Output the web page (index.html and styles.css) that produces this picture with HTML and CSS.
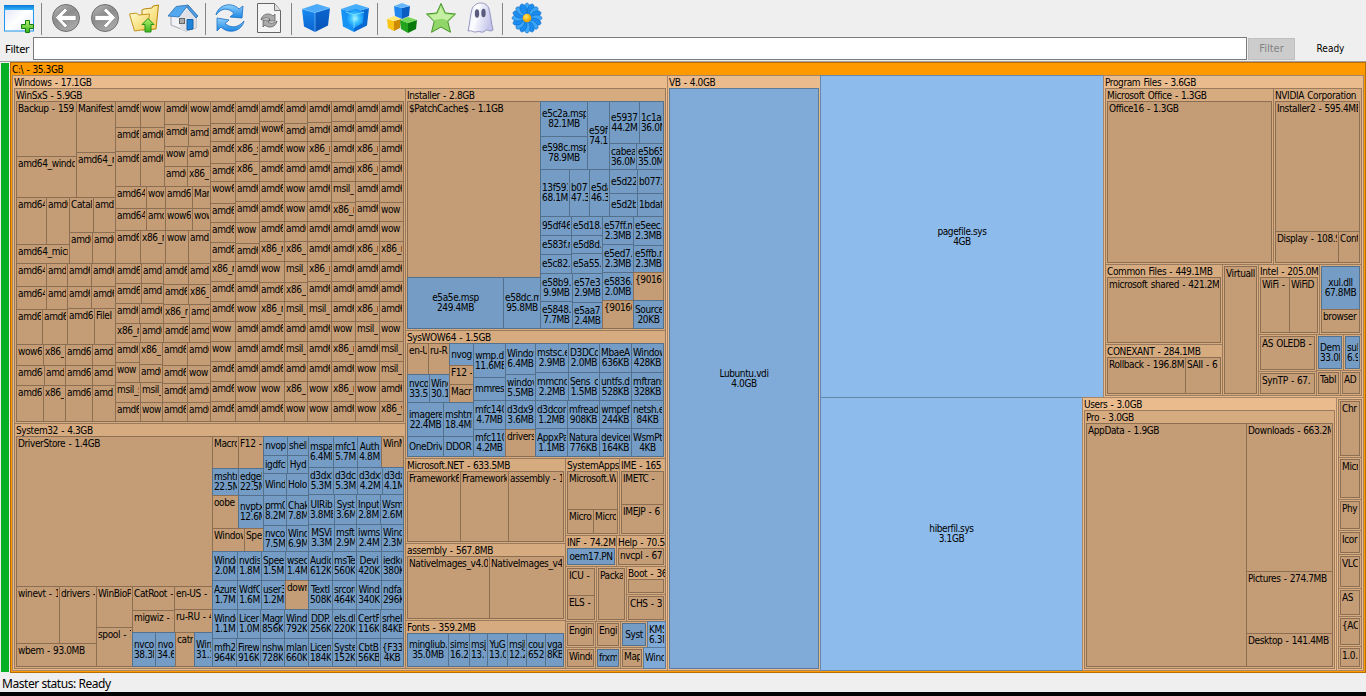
FILE: index.html
```html
<!DOCTYPE html>
<html lang="en">
<head>
<meta charset="utf-8">
<title>Disk usage</title>
<link rel="stylesheet" href="styles.css">
</head>
<body>
<svg class="defs" width="0" height="0" aria-hidden="true">
  <defs>
    <linearGradient id="gray" x1="0" y1="0" x2="0.6" y2="1"><stop offset="0" stop-color="#b9b9b9"/><stop offset="0.5" stop-color="#8c8c8c"/><stop offset="1" stop-color="#a9a9a9"/></linearGradient>
    <linearGradient id="pane" x1="0" y1="0" x2="1" y2="1"><stop offset="0" stop-color="#dfe2f6"/><stop offset="0.5" stop-color="#ffffff"/><stop offset="1" stop-color="#e4e9fa"/></linearGradient>
    <linearGradient id="title" x1="0" y1="0" x2="0" y2="1"><stop offset="0" stop-color="#0a78d8"/><stop offset="1" stop-color="#35b2f8"/></linearGradient>
    <linearGradient id="folder" x1="0" y1="0" x2="1" y2="1"><stop offset="0" stop-color="#fffbd0"/><stop offset="1" stop-color="#f3cf52"/></linearGradient>
    <linearGradient id="lime" x1="0" y1="0" x2="0" y2="1"><stop offset="0" stop-color="#b8f070"/><stop offset="1" stop-color="#35b41d"/></linearGradient>
    <linearGradient id="sky" x1="0" y1="0" x2="0" y2="1"><stop offset="0" stop-color="#8fd0fb"/><stop offset="1" stop-color="#1c86e4"/></linearGradient>
    <linearGradient id="cubeL" x1="0" y1="0" x2="0" y2="1"><stop offset="0" stop-color="#188af0"/><stop offset="1" stop-color="#0a62cf"/></linearGradient>
    <linearGradient id="cubeR" x1="0" y1="0" x2="0" y2="1"><stop offset="0" stop-color="#0b65cf"/><stop offset="1" stop-color="#0754b8"/></linearGradient>
    <linearGradient id="ghost" x1="0" y1="0" x2="1" y2="0.3"><stop offset="0" stop-color="#e4e4f8"/><stop offset="0.4" stop-color="#fdfdff"/><stop offset="1" stop-color="#c4c4ea"/></linearGradient>
    <radialGradient id="glow"><stop offset="0" stop-color="#aef6ff"/><stop offset="0.5" stop-color="#38c0ff"/><stop offset="1" stop-color="#128cf4"/></radialGradient>
    <radialGradient id="sun" cx="0.4" cy="0.35"><stop offset="0" stop-color="#ffe96a"/><stop offset="1" stop-color="#f0a800"/></radialGradient>
  </defs>
</svg>

<div class="toolbar">
  <svg class="icon" viewBox="0 0 32 32"><rect x="1.5" y="3.5" width="29" height="25.5" fill="url(#pane)" stroke="#2397ee"/><rect x="1" y="3" width="30" height="5" fill="url(#title)"/><path d="M22.500 18.500h4v4h4v4h-4v4h-4v-4h-4v-4h4z" fill="url(#lime)" stroke="#127a12"/></svg>
  <i class="sep"></i>
  <svg class="icon" viewBox="0 0 32 32"><circle cx="16" cy="16" r="13.500" fill="url(#gray)" stroke="#707070"/><path d="M5.500 15.500L15 6l2.500 2.500-5 5H26v5H12.500l5 5L15 26z" fill="#fff" stroke="#777" stroke-width=".6"/></svg>
  <svg class="icon" viewBox="0 0 32 32"><circle cx="16" cy="16" r="13.500" fill="url(#gray)" stroke="#707070"/><path d="M26.500 15.500L17 6l-2.500 2.500 5 5H6v5h13.500l-5 5L17 26z" fill="#fff" stroke="#777" stroke-width=".6"/></svg>
  <svg class="icon" viewBox="0 0 32 32"><path d="M14 8l2-1 8-1 1-2 5.500-1-2.500 24-14 1z" fill="url(#folder)" stroke="#b8860b"/><path d="M1.500 12l7-1 2 2 11-1-2 15-13 2z" fill="url(#folder)" stroke="#c6951a"/><path d="M20 16.500l6 6h-3v7.500h-6v-7.500h-3z" fill="url(#lime)" stroke="#249014"/></svg>
  <svg class="icon" viewBox="0 0 32 32"><path d="M4 14l6-7 13-2 6 10v11l-10 3L4 23z" fill="#f1f2f5" stroke="#8e939c" stroke-width=".8"/><path d="M13 15v12l6 2 10-3V15l-8-9z" fill="#dfe1e7"/><path d="M1 14L9 4.500l12-1.500-9 12z" fill="#53a7ee" stroke="#2e6fb0" stroke-width=".8"/><path d="M21 3l10 11-2 2-8.500-10z" fill="#4b9be4" stroke="#2e6fb0" stroke-width=".8"/><rect x="12.500" y="16.500" width="5" height="5" fill="#aaa" stroke="#666"/><path d="M20 17.500h6v9.500l-6 1z" fill="#1f83da" stroke="#1762a8"/></svg>
  <i class="sep"></i>
  <svg class="icon" viewBox="0 0 32 32"><path d="M2 13C4 3 17-1 25 7l4-3-1 12-12-1 4-3.500C14 5 7 6 2 13z" fill="url(#sky)" stroke="#196fc5" stroke-width=".8"/><path d="M30 19c-2 10-15 14-23 6l-4 4V16l12 2-4 3.500c6 5 13 4.500 19-2.500z" fill="url(#sky)" stroke="#196fc5" stroke-width=".8"/></svg>
  <svg class="icon" viewBox="0 0 32 32"><path d="M4.500 1.500h17l6 7v22h-23z" fill="#f4f4f4" stroke="#666"/><path d="M21.500 1.500v7h6" fill="#ddd" stroke="#777"/><path d="M8 18c1-6 8-8 12-4l2-2v7h-7l2-2c-3-2-6-1-9 1z" fill="#aaa" stroke="#555" stroke-width=".7"/><path d="M24 19c-1 6-8 8-12 4l-2 2v-7h7l-2 2c3 2 6 1 9-1z" fill="#aaa" stroke="#555" stroke-width=".7"/></svg>
  <i class="sep"></i>
  <svg class="icon" viewBox="0 0 32 32"><path d="M2 7l13 3.500v19.500L4 24.500z" fill="url(#cubeL)"/><path d="M15 10.500L30 6l-2 17.500-13 6.500z" fill="url(#cubeR)"/><path d="M2 7l15-5 13 4-15 4.500z" fill="#4baafa"/><path d="M2 7l13 3.500L30 6M15 10.500V30" fill="none" stroke="#77c1ff" stroke-width=".7"/></svg>
  <svg class="icon" viewBox="0 0 32 32"><path d="M2 7l13 3.500v19.500L4 24.500z" fill="#1594f5"/><path d="M15 10.500L30 6l-2 17.500-13 6.500z" fill="#0869d3"/><path d="M2 7l15-5 13 4-15 4.500z" fill="#45adfa"/><path d="M7 10l10-3 8 3-1 11-9 5-7-4z" fill="url(#glow)"/><path d="M7 10l8 3 10-3M15 13v13" fill="none" stroke="#8de9ff" stroke-width=".8"/></svg>
  <i class="sep"></i>
  <svg class="icon" viewBox="0 0 32 32"><path d="M8 4l8 2v11l-7-3z" fill="#2187ee"/><path d="M16 6l8-2-1 10-7 3z" fill="#0a5cc3"/><path d="M8 4l8-3 8 3-8 2z" fill="#67b6fb"/><path d="M1 17l7 2v10l-6-3z" fill="#f9c416"/><path d="M8 19l7-2-1 9-6 3z" fill="#cc8b00"/><path d="M1 17l7-3 7 3-7 2z" fill="#ffe878"/><path d="M14 18l8 3v10l-7-4z" fill="#22a41f"/><path d="M22 21l9-3-1 9-8 4z" fill="#08790a"/><path d="M14 18l8-3 9 3-9 3z" fill="#73d655"/></svg>
  <svg class="icon" viewBox="0 0 32 32"><path d="M16 1.500l4.300 9.500 10.200 1-7.700 7.500 2.700 10.800L16 25l-9.500 5.300 2.700-10.800L1.500 12l10.200-1z" fill="#91d669" stroke="#459528"/><path d="M16 4l3.500 8 8.500 1-6 5.500c-5-3-11-1-13 0L4 13l8.500-1z" fill="#c5efa2"/></svg>
  <svg class="icon" viewBox="0 0 32 32"><path d="M8 7c3-8 15-8 17 0 2 7 2 13 4 21-3 2-4 0-6 0s-3 3-6 2c-2-1-4 0-6 0-3 0-3-2-7-1C6 21 6 14 8 7z" fill="url(#ghost)" stroke="#8080b4" stroke-width=".8"/><ellipse cx="13" cy="11.500" rx="2.200" ry="4.300" fill="#5b5b80"/><ellipse cx="19.500" cy="11" rx="2.200" ry="4.300" fill="#5b5b80"/></svg>
  <i class="sep"></i>
  <svg class="icon" id="flower" viewBox="0 0 32 32"></svg>
</div>

<div class="filterbar">
  <label class="filter-label">Filter</label>
  <div class="filter-input"></div>
  <div class="filter-button">Filter</div>
  <span class="state">Ready</span>
</div>

<main class="view">
  <div class="gauge"></div>
  <div class="map" id="map"></div>
</main>
<footer class="status">Master status: Ready</footer>
<div class="desktop"></div>
<script src="app.js"></script>
</body>
</html>
```

FILE: styles.css
```css
* { box-sizing: border-box; }
html, body { height: 696px; overflow: hidden; }
body {
  margin: 0;
  display: flex;
  flex-direction: column;
  background: #efefef;
  color: #000;
  font-family: "DejaVu Sans Condensed", "DejaVu Sans", sans-serif;
  font-stretch: condensed;
  font-size: 10px;
}
.defs { position: absolute; }

.toolbar { height: 37px; flex: none; display: flex; gap: 7px; padding: 2px 3px; }
.icon { width: 32px; height: 32px; flex: none; display: block; }
.sep { width: 1px; height: 32px; margin: 1px 1px 0 -1px; background: #858585; flex: none; }

.filterbar { height: 24px; flex: none; display: flex; }
.filter-label { width: 33px; padding-left: 5px; line-height: 24px; font-family: "Noto Sans", sans-serif; font-stretch: normal; font-size: 11px; letter-spacing: -0.3px; }
.filter-input { width: 1214px; height: 23px; background: #fff; border: 1px solid #7a7a7a; }
.filter-button { width: 47px; height: 22px; margin: 1px 0 0 1px; line-height: 20px; text-align: center; background: #ccc; border: 1px solid #bfbfbf; color: #838383; font-size: 11px; }
.state { width: 71px; text-align: center; line-height: 24px; }

.view { height: 612px; flex: none; display: flex; border-top: 1px solid #a0a0a0; }
.gauge { width: 8px; margin: 1px 1px 1px 1px; background: #06b025; flex: none; }
.map { flex: none; width: 1356px; letter-spacing: -0.38px; word-spacing: 0.7px; }
.status { height: 19px; flex: none; padding-left: 2px; line-height: 22px; font-family: "Noto Sans", sans-serif; font-stretch: normal; font-size: 12px; letter-spacing: -0.45px; }
.desktop { flex: 1; background: #030303; }

.split { display: flex; flex: none; }
.row { flex-direction: row; }
.col { flex-direction: column; }

/* Neighbouring boxes share a one-pixel line. */
.box { flex: none; border: 1px solid; margin: 0 -1px -1px 0; white-space: nowrap; }
.body { padding: 0 0 0 1px; }
.plain { padding-top: 1px; }
.head { height: 12px; line-height: 13px; padding-left: 1px; overflow: hidden; }
.name { line-height: 13px; margin: 0 1px; height: 100%; overflow: hidden; }
.file { display: flex; flex-direction: column; justify-content: center; padding: 0 1px; }
.file > span { display: block; line-height: 10px; text-align: center; overflow: hidden; flex: none; }

.dir.d0 { background: #ff9900; border-color: #b86e00; }
.dir.d1 { background: #eabb8d; border-color: #a88665; }
.dir.d2 { background: #d6ab80; border-color: #997a5c; }
.dir.d3 { background: #c49c75; border-color: #8c6f53; }
.file.d1 { background: #8dbbec; border-color: #6587a9; }
.file.d2 { background: #80abd8; border-color: #5c7b9b; }
.file.d3 { background: #749cc4; border-color: #53708d; }
```

FILE: app.js
```js
// Layout data. Strings are leaves: "+name|size" is a file, anything else a directory.
// H and V split an area; the numbers between the parts are the divider positions.
const H = (...p) => ({ dir: 'row', p });
const V = (...p) => ({ dir: 'col', p });
const F = (title, body) => ({ title, body });
const N = body => ({ title: null, body });

// A row of leaves from a space-separated list and its dividers.
const L = (names, ...edges) => {
  const out = [];
  names.split(' ').forEach((n, i) => { out.push(n.replace(/~/g, ' ')); if (i < edges.length) out.push(edges[i]); });
  return H(...out);
};

const gridX = [235, 259, 284, 307, 331, 355, 379];
const W = s => L(s, ...gridX);
// Several grid rows whose inner dividers differ by column.
const stack = (rows, edges) => {
  const cells = rows.map(r => r.split(' '));
  const out = [];
  for (let c = 0; c < 8; c++) {
    const v = [];
    cells.forEach((r, i) => { v.push(r[c]); if (i < cells.length - 1) v.push(edges[c][i]); });
    out.push(V(...v));
    if (c < 7) out.push(gridX[c]);
  }
  return H(...out);
};

const sxsLeft = V(
  H(V('Backup - 159.', 156, 'amd64_windo'), 76, V('Manifest', 152, 'amd64_r')), 197,
  H(V(L('amd64 amd6', 46), 244, 'amd64_micr'), 69, V(L('Catal amd', 93), 232, L('amd6 amd6', 92))), 263,
  L('amd64 amd amd6 amd6', 46, 67, 91), 286,
  H(V(L('amd64 amd', 46), 309, L('amd6 amd6', 42)), 67, V(L('amd6 amd6', 91), 308, L('amd64 FileI', 94))), 344,
  L('wow6 x86_ amd64 amd', 43, 65, 92), 365,
  L('amd64 amd amd64 amd', 44, 65, 92), 385,
  L('amd64 x86_ amd64 amd', 43, 65, 92));

const sxsMid = V(
  H(V(L('amd6 wow', 140), 127, L('amd6 amd6', 140), 151, L('amd6 amd6', 140)), 164,
    V(H(V('amd6', 124, 'amd6'), 188, V('wow', 125, 'amd')), 146, L('wow amd6', 187), 166, L('amd6 x86_', 187))), 186,
  L('amd64 wow amd64 Mar', 146, 165, 192), 208,
  L('amd64 amd wow6 wow', 146, 165, 192), 230,
  L('amd6 x86_r wow amd', 140, 165, 188), 263,
  H(V(L('amd64 amd', 141), 283, L('amd64 amd', 141), 303, L('amd6 amd6', 139), 323, L('x86_r amd6', 140)), 163,
    V(L('amd6 amd', 188), 284, L('amd6 x86_', 188), 304, L('x86_r amd', 189), 323, L('amd6 amd', 189))), 342,
  H(V(H(V('amd6', 362, 'wow'), 139, V('x86_s', 364, 'amd6')), 382, L('msil_s msil_', 140), 402, L('amd6 wow', 140)), 162,
    V(L('amd6 amd6', 187), 365, L('amd6 wow', 187), 383, L('amd6 amd6', 187), 402, L('amd6 amd6', 187))));

const sxsRight = V(
  stack(['amd6 amd6 amd6 amd6 amd6 amd6 amd6 amd6', 'amd6 amd6 wow6 amd6 amd6 amd6 amd6 amd6'],
    [[123], [123], [121], [123], [122], [121], [121], [121]]), 141,
  stack(['amd6 x86_s amd6 wow x86_r amd6 x86_r amd6', 'amd6 x86_ amd6 amd6 amd6 amd6 x86_r amd6'],
    [[163], [161], [161], [161], [161], [162], [161], [161]]), 181,
  stack(['wow6 amd6 amd6 wow amd6 msil_ amd6 amd6', 'amd6 amd6 amd6 wow amd6 x86_r amd6 wow',
    'amd6 wow amd6 amd6 amd6 amd6 amd6 wow', 'amd6 amd6 x86_r x86_ amd6 amd6 x86_r x86_r'],
    [[203, 222, 242], [201, 222, 243], [201, 221, 241], [201, 221, 241], [201, 221, 241], [202, 221, 241], [201, 221, 241], [202, 221, 241]]), 261,
  stack(['x86_r amd6 wow msil_ x86_r amd6 amd6 amd6', 'amd6 amd6 amd6 x86_c amd6 amd6 amd6 amd6'],
    [[281], [281], [282], [282], [281], [281], [281], [281]]), 301,
  W('amd6 wow x86_r msil_ msil_ amd6 x86_r amd6'), 321,
  W('wow amd6 amd6 amd6 amd6 wow msil_ wow'), 341,
  W('wow amd6 amd6 msil_ amd6 x86_r amd6 msil_'), 361,
  W('amd6 amd6 amd6 amd6 amd6 amd6 wow msil_'), 381,
  W('amd6 wow wow x86_r wow x86_r wow amd6'), 401,
  W('amd6 amd6 amd6 wow wow amd6 wow x86_v'));

const sys32 = H(
  V('DriverStore - 1.4GB', 586,
    H(V(H('winevt - 1', 59, 'drivers -'), 643, 'wbem - 93.0MB'), 96,
      V('WinBioP', 627, 'spool - 7'), 132,
      V(H(V('CatRoot -', 610, 'migwiz - 4'), 174, V('en-US -', 609, 'ru-RU - 4')), 632,
        L('+nvco|38.3M +nvo|34.6 catro +Win|31.1', 155, 175, 194)))), 212,
  V(H(
    V(L('Macro F12~-', 238), 468, L('+mshtr|22.5M +edgeh|22.5M', 238), 495, L('oobe +nvptx|12.6M', 238), 528, L('Window Spe', 244)), 263,
    V(L('+nvop +shell', 287), 455, L('+igdfcl +Hyd', 287), 473, L('+Wind +Holo', 286), 495, L('+prm0|8.2M +Chak|7.8M', 286), 525, L('+nvcop|7.5M +Wind|6.9M', 286)), 308,
    V(H(L('+mspai|6.4MB +mfc1|5.7M', 333), 357, L('+Auth|4.8M WinM', 381)), 467,
      L('+d3dxS|5.3M +d3dcs|5.3M +d3dxS|4.2M +d3dx|4.1M', 333, 357, 382), 494,
      L('+UIRib|3.8MB +Syst|3.6M +Input|2.8M +Wsm|2.6M', 334, 356, 380), 524,
      L('+MSVi|3.3M +msfte|2.9M +iwms|2.4M +Wind|2.3M', 334, 356, 381))), 551,
    L('+Windo|2.0M +nvdis|1.8M +Spee|1.5M +wsec|1.4M +Audio|612K +msTe|560K +Devi|420K +iedkc|380K', 237, 261, 285, 308, 332, 356, 381), 580,
    L('+Azure|1.7M +WdfC|1.6M +user3|1.2M down +TextI|508K +srcore|464K +Wind|340K +ndfap|296K', 237, 261, 285, 308, 332, 356, 381), 609,
    L('+Windo|1.1M +Licen|1.0M +Magr|856K +Wind|792K +DDP.|256K +els.dll|220K +CertF|116K +srhelp|84KB', 237, 260, 284, 308, 332, 356, 380), 638,
    L('+mfh2|964K +Firew|916K +nshw|728K +mlang|660K +Licens|184K +Syste|152K +CbtB|56KB +{F33|4KB', 236, 260, 284, 308, 332, 356, 380)));

const installer = H(
  V('$PatchCache$ - 1.1GB', 277, L('+e5a5e.msp|249.4MB +e58dc.m|95.8MB', 503)), 540,
  V(H(V('+e5c2a.msp|82.1MB', 136, '+e598c.msp|78.9MB'), 587, '+e59f4|74.1', 609,
      V(L('+e5937.|44.2M +1c1ab|36.0M', 639), 143, L('+cabea|36.0M +e5b65|35.0M', 636))), 169,
    H(L('+13f591|68.1M +b077|47.3 +e5da|46.3', 569, 589), 609, V(L('+e5d22 +b0771', 637), 193, L('+e5d2b +1bdaf', 637))), 216,
    H(V(H(V('+95df46', 235, '+e583f.r', 254, '+e5c82.r'), 571, V('+e5d18.', 235, '+e5d8d.', 253, '+e5a55.')), 273,
        H(V('+e58b9.r|9.9MB', 301, '+e5848.r|7.7MB'), 572, V('+e57e3.|2.9MB', 302, '+e5aa7.|2.4MB'))), 602,
      V('+e57ff.m|2.3MB', 244, '+e5ed7.|2.3MB', 272, '+e5836.|2.0MB', 300, '{90160'), 633,
      V('+e5eec.|2.3MB', 245, '+e5ffb.r|2.3MB', 272, '{90160', 300, '+Source|20KB'))));

const wow64 = H(
  V(H(V(L('en-U ru-R', 428), 374, L('+nvco|33.5 +Winc|30.1', 429)), 449, V('+nvog', 365, 'F12 -', 384, 'Macr')), 402,
    H(V('+imagere|22.4MB', 436, '+OneDriv'), 443, V('+mshtm|18.4MB', 436, '+DDOR'))), 473,
  V('+wmp.d|11.6MB', 377, '+mmres', 400, '+mfc140|4.7MB', 429, '+mfc110|4.2MB'), 505,
  V('+Windov|6.4MB', 374, '+windov|5.5MB', 400, '+d3dx9_|3.6MB', 429, 'drivers'), 535,
  V(L('+mstsc.e|2.9MB +D3DCo|2.0MB +MbaeA|636KB +Window|428KB', 568, 599, 631), 372,
    L('+mmcnd|2.2MB +Sens_c|1.5MB +untfs.dl|528KB +mftrans|328KB', 568, 599, 631), 400,
    L('+d3dcon|1.2MB +mfread|908KB +wmpef|244KB +netsh.e|84KB', 567, 599, 631), 428,
    L('+AppxPa|1.1MB +Natural|776KB +devicer|164KB +WsmPt|4KB', 567, 599, 631)));

const small = V(
  H(F('SystemApps', V('Microsoft.W', 509, L('Micros Micro', 593))), 619, F('IME - 165', V('IMETC -', 504, 'IMEJP - 6'))), 535,
  H(F('INF - 74.2M', '+oem17.PN'), 616, F('Help - 70.5', 'nvcpl - 67')), 566,
  H(N(V('ICU -', 595, 'ELS -')), 596, N('Packa'), 626, V(F('Boot - 36', ''), 594, N('CHS - 3'))), 621,
  H(V(H(N('Engin'), 595, N('Engi')), 647, H(N('Windo'), 595, N('+frxm'))), 620,
    V(H(N('+Syst'), 647, '+KMS|6.3M'), 647, H(N('Map'), 643, '+Wind'))));

const windows = H(
  V(F('WinSxS - 5.9GB', H(sxsLeft, 115, sxsMid, 210, sxsRight)), 423, F('System32 - 4.3GB', sys32)), 405,
  V(F('Installer - 2.8GB', installer), 330, F('SysWOW64 - 1.5GB', wow64), 458,
    H(V(F('Microsoft.NET - 633.5MB', H('Framework6', 460, 'Framework', 508, 'assembly - 1')), 543,
        F('assembly - 567.8MB', H('NativeImages_v4.0', 489, 'NativeImages_v4')), 620,
        F('Fonts - 359.2MB', L('+mingliub.t|35.0MB +sims|16.2 +msj|13.7 +YuG|13.0 +msjl|12.2 +cour|652 +vga|8KB', 448, 469, 487, 507, 526, 545))), 565,
      small)));

const programs = V(
  H(F('Microsoft Office - 1.3GB', 'Office16 - 1.3GB'), 1273, F('NVIDIA Corporation', V('Installer2 - 595.4MB', 231, H('Display - 108.9', 1338, 'Cont')))), 264,
  H(V(F('Common Files - 449.1MB', 'microsoft shared - 421.2MB'), 344, F('CONEXANT - 284.1MB', H('Rollback - 196.8M', 1185, 'SAII - 6'))), 1222,
    N('Virtuall'), 1258,
    V(H(F('Intel - 205.0M', H('WiFi -', 1289, 'WiFiD')), 1319, N(V('+xul.dll|67.8MB', 309, 'browser'))), 334,
      H(V(N('AS OLEDB -'), 371, N('SynTP - 67.')), 1316, V(H(N('+Dem|33.0M'), 1343, N('+sul|6.9')), 370, H(N('Tabl'), 1340, N('AD')))))));

const users = F('Pro - 3.0GB', H('AppData - 1.9GB', 1246, V('Downloads - 663.2M', 571, 'Pictures - 274.7MB', 633, 'Desktop - 141.4MB')));
const others = V(N('Chr'), 457, N('Micr'), 499, N('Phy'), 530, N('Icor'), 554, N('VLC'), 588, N('AS'), 616, N('{AC'), 646, N('1.0.'));

const root = F('C:\\ - 35.3GB', H(
  F('Windows - 17.1GB', windows), 667,
  F('VB - 4.0GB', '+Lubuntu.vdi|4.0GB'), 820,
  V(H('+pagefile.sys|4GB', 1103, F('Program Files - 3.6GB', programs)), 397,
    H('+hiberfil.sys|3.1GB', 1082, F('Users - 3.0GB', users), 1336, N(others)))));

function el(cls, text) {
  const e = document.createElement('div');
  e.className = cls;
  if (text) e.textContent = text;
  return e;
}

function build(node, x0, y0, x1, y1, depth) {
  const w = x1 - x0, h = y1 - y0;
  if (node.p) {
    const box = el('split ' + node.dir);
    box.style.width = w + 'px';
    box.style.height = h + 'px';
    const across = node.dir === 'row';
    let at = across ? x0 : y0;
    for (let i = 0; i < node.p.length; i += 2) {
      const end = i + 1 < node.p.length ? node.p[i + 1] : (across ? x1 : y1);
      box.append(across ? build(node.p[i], at, y0, end, y1, depth) : build(node.p[i], x0, at, x1, end, depth));
      at = end;
    }
    return box;
  }
  let box;
  if (typeof node === 'string') {
    if (node[0] === '+') {
      box = el('box file d' + depth);
      node.slice(1).split('|').forEach(t => {
        const s = document.createElement('span');
        s.textContent = t;
        box.append(s);
      });
    } else {
      box = el('box dir d' + depth);
      box.append(el('name', node));
    }
  } else {
    box = el('box dir d' + depth);
    const top = node.title === null ? 2 : 13;
    if (node.title !== null) box.append(el('head', node.title));
    const body = el(node.title === null ? 'body plain' : 'body');
    body.append(build(node.body, x0 + 2, y0 + top, x1 - 2, y1 - 2, depth + 1));
    box.append(body);
  }
  box.style.width = w + 1 + 'px';
  box.style.height = h + 1 + 'px';
  return box;
}

document.getElementById('map').append(build(root, 10, 62, 1365, 672, 0));

let petals = '';
for (let i = 0; i < 16; i++) {
  petals += `<ellipse cx="16" cy="6.500" rx="3" ry="5.500" fill="${i % 2 ? '#1b8df0' : '#3ba6fa'}" stroke="#0b62bd" stroke-width=".5" transform="rotate(${i * 22.5} 16 16)"/>`;
}
document.getElementById('flower').innerHTML = petals + '<circle cx="16" cy="16" r="4.300" fill="url(#sun)"/>';
```
